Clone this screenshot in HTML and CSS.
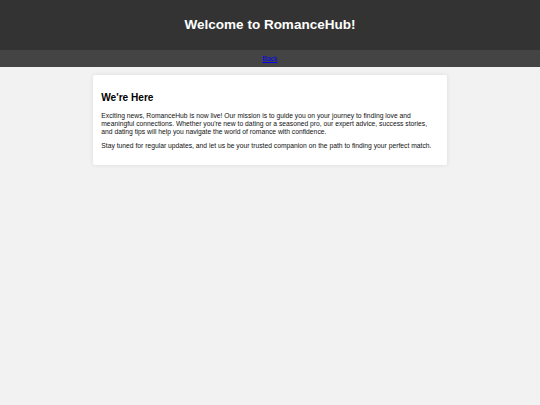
FILE: index.html
```html
<!DOCTYPE html>
<html lang="en">
<head>
<meta charset="utf-8">
<title>RomanceHub</title>
<link rel="stylesheet" href="styles.css">
</head>
<body>
<header class="site-header">
  <h1 class="site-title">Welcome to RomanceHub!</h1>
</header>
<nav class="site-nav">
  <a href="#" class="nav-link">Back</a>
</nav>
<main class="card">
  <h2 class="card-title">We're Here</h2>
  <p class="card-text">Exciting news, RomanceHub is now live! Our mission is to guide you on your journey to finding love and meaningful connections. Whether you're new to dating or a seasoned pro, our expert advice, success stories, and dating tips will help you navigate the world of romance with confidence.</p>
  <p class="card-text">Stay tuned for regular updates, and let us be your trusted companion on the path to finding your perfect match.</p>
</main>
</body>
</html>
```

FILE: styles.css
```css
html, body {
  margin: 0;
  padding: 0;
}
body {
  background: #f2f2f2;
  font-family: "Liberation Sans", Arial, sans-serif;
  font-size: 6.75px;
  line-height: 7.76px;
  color: #111;
}
.site-header {
  background: #333;
  color: #fff;
  text-align: center;
  padding: 8.44px 0;
}
.site-title {
  font-size: 13.5px;
  line-height: 15.5px;
  margin: 9.05px 0;
  font-weight: bold;
}
.site-nav {
  background: #444;
  text-align: center;
  padding: 4.22px 0;
}
.nav-link {
  color: #0000ee;
}
.card {
  display: block;
  max-width: 337.5px;
  margin: 8.44px auto;
  background: #fff;
  padding: 8.44px;
  border-radius: 2px;
  box-shadow: 0 0 4.2px rgba(0, 0, 0, 0.1);
}
.card-title {
  font-size: 10.125px;
  line-height: 11.65px;
  margin: 8.4px 0;
  color: #000;
}
.card-text {
  margin: 6.75px 0;
}
```
